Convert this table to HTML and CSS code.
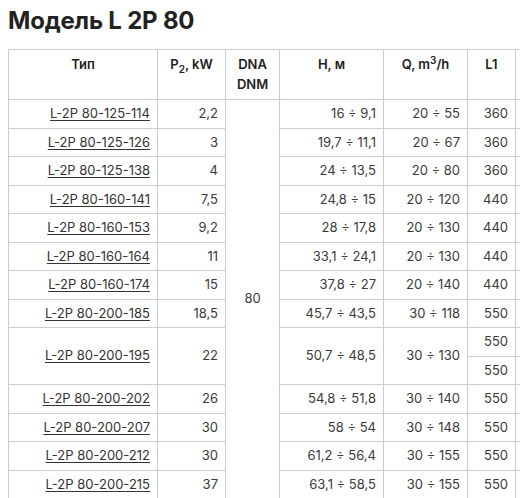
FILE: index.html
```html
<!DOCTYPE html>
<html lang="ru">
<head>
<meta charset="utf-8">
<link rel="stylesheet" href="styles.css">
</head>
<body>
<div class="page">
  <h1 class="title">Модель L 2P 80</h1>
  <div class="table-wrap">
    <table class="spec">
      <colgroup>
        <col class="c-type"><col class="c-p"><col class="c-dn"><col class="c-h"><col class="c-q"><col class="c-l1"><col class="c-l2">
      </colgroup>
      <thead>
        <tr>
          <th>Тип</th>
          <th>P<sub>2</sub>, kW</th>
          <th>DNA<br>DNM</th>
          <th>H, м</th>
          <th>Q, m<sup>3</sup>/h</th>
          <th>L1</th>
          <th></th>
        </tr>
      </thead>
      <tbody>
        <tr><td><a href="#">L-2P 80-125-114</a></td><td>2,2</td><td class="dn" rowspan="14">80</td><td>16 ÷ 9,1</td><td>20 ÷ 55</td><td>360</td><td></td></tr>
        <tr><td><a href="#">L-2P 80-125-126</a></td><td>3</td><td>19,7 ÷ 11,1</td><td>20 ÷ 67</td><td>360</td><td></td></tr>
        <tr><td><a href="#">L-2P 80-125-138</a></td><td>4</td><td>24 ÷ 13,5</td><td>20 ÷ 80</td><td>360</td><td></td></tr>
        <tr><td><a href="#">L-2P 80-160-141</a></td><td>7,5</td><td>24,8 ÷ 15</td><td>20 ÷ 120</td><td>440</td><td></td></tr>
        <tr><td><a href="#">L-2P 80-160-153</a></td><td>9,2</td><td>28 ÷ 17,8</td><td>20 ÷ 130</td><td>440</td><td></td></tr>
        <tr><td><a href="#">L-2P 80-160-164</a></td><td>11</td><td>33,1 ÷ 24,1</td><td>20 ÷ 130</td><td>440</td><td></td></tr>
        <tr><td><a href="#">L-2P 80-160-174</a></td><td>15</td><td>37,8 ÷ 27</td><td>20 ÷ 140</td><td>440</td><td></td></tr>
        <tr><td><a href="#">L-2P 80-200-185</a></td><td>18,5</td><td>45,7 ÷ 43,5</td><td>30 ÷ 118</td><td>550</td><td></td></tr>
        <tr><td rowspan="2"><a href="#">L-2P 80-200-195</a></td><td rowspan="2">22</td><td rowspan="2">50,7 ÷ 48,5</td><td rowspan="2">30 ÷ 130</td><td>550</td><td></td></tr>
        <tr><td>550</td><td></td></tr>
        <tr><td><a href="#">L-2P 80-200-202</a></td><td>26</td><td>54,8 ÷ 51,8</td><td>30 ÷ 140</td><td>550</td><td></td></tr>
        <tr><td><a href="#">L-2P 80-200-207</a></td><td>30</td><td>58 ÷ 54</td><td>30 ÷ 148</td><td>550</td><td></td></tr>
        <tr><td><a href="#">L-2P 80-200-212</a></td><td>30</td><td>61,2 ÷ 56,4</td><td>30 ÷ 155</td><td>550</td><td></td></tr>
        <tr><td><a href="#">L-2P 80-200-215</a></td><td>37</td><td>63,1 ÷ 58,5</td><td>30 ÷ 155</td><td>550</td><td></td></tr>
      </tbody>
    </table>
  </div>
</div>
</body>
</html>
```
FILE: styles.css
```css
html, body {
  margin: 0;
  padding: 0;
  background: #ffffff;
  overflow: hidden;
}
.page {
  width: 520px;
  height: 498px;
  overflow: hidden;
  padding: 6px 0 0 8px;
  box-sizing: border-box;
  font-family: Inter, "Noto Sans", sans-serif;
  color: #3a3a3a;
}
.title {
  margin: 0 0 14px;
  font-size: 24px;
  line-height: 29px;
  font-weight: 700;
  color: #222;
  letter-spacing: -0.2px;
}
.table-wrap {
  width: 560px;
}
.spec {
  border-collapse: collapse;
  table-layout: fixed;
  width: 560px;
  font-size: 13px;
  line-height: 19.5px;
}
.c-type { width: 149px; }
.c-p { width: 68px; }
.c-dn { width: 54px; }
.c-h { width: 104px; }
.c-q { width: 84px; }
.c-l1 { width: 48px; }
.c-l2 { width: 53px; }
.spec th, .spec td {
  border: 1px solid #c8ccd4;
  padding: 4px 7px 4px 4px;
  white-space: nowrap;
}
.spec th {
  padding: 5px 4px;
  text-align: center;
  vertical-align: top;
  font-weight: 600;
  color: #222;
}
.spec td {
  text-align: right;
  vertical-align: middle;
}
.spec td.dn {
  text-align: center;
  padding: 4px;
}
.spec sub, .spec sup {
  font-size: 10px;
  line-height: 0;
}
.spec a {
  color: #333;
  text-decoration: underline;
  text-underline-offset: 2px;
}
```
